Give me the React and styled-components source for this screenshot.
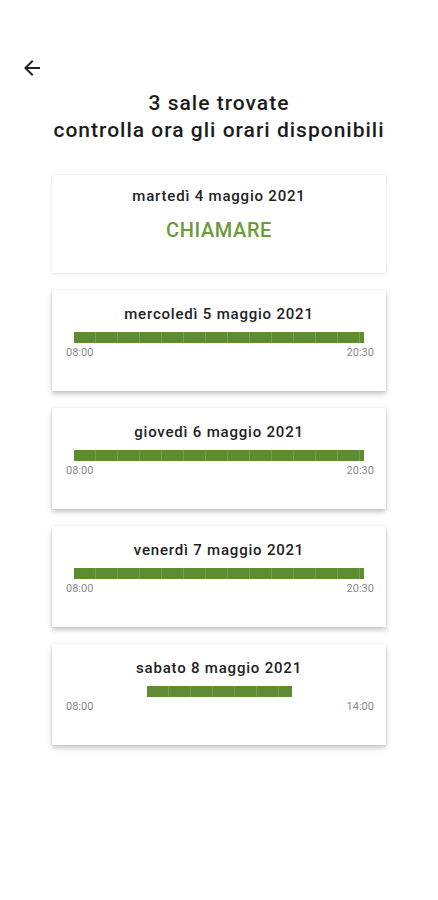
import React from "react";
import styled, { createGlobalStyle } from "styled-components";

const Global = createGlobalStyle`
  html, body { margin: 0; padding: 0; background: #ffffff; }
  body { font-family: Roboto, "Noto Sans", sans-serif; color: #1f1f1f; }
`;

const Page = styled.div`
  width: 438px;
  min-height: 900px;
  background: #fff;
  display: flex;
  flex-direction: column;
  align-items: center;
`;

const TopBar = styled.div`
  align-self: stretch;
  height: 24px;
  padding: 56px 0 0 20px;
  display: flex;
  align-items: center;
`;

const BackButton = styled.button`
  width: 24px;
  height: 24px;
  padding: 0;
  border: none;
  background: none;
  display: flex;
  color: #222;
`;

const Title = styled.h1`
  margin: 10px 0 0;
  font-size: 21px;
  line-height: 27px;
  font-weight: 500;
  text-align: center;
  color: #1c1c1c;
  letter-spacing: 1px;
`;

const List = styled.div`
  margin-top: 31px;
  display: flex;
  flex-direction: column;
  gap: 17px;
  width: 334px;
`;

const Card = styled.div`
  background: #fff;
  height: ${(p) => (p.$flat ? 98 : 101)}px;
  box-sizing: border-box;
  display: flex;
  flex-direction: column;
  align-items: center;
  box-shadow: ${(p) =>
    p.$flat
      ? "0 0 2px rgba(0,0,0,0.12), 0 1px 2px rgba(0,0,0,0.06)"
      : "0 0 2px rgba(0,0,0,0.10), 0 3px 5px rgba(0,0,0,0.22)"};
`;

const DateText = styled.div`
  margin-top: ${(p) => (p.$flat ? 12 : 15)}px;
  font-size: 15px;
  line-height: 18px;
  font-weight: 500;
  color: #222;
  letter-spacing: 0.8px;
`;

const CallText = styled.div`
  margin-top: 13px;
  font-size: 20px;
  line-height: 24px;
  font-weight: 500;
  color: #6b9a3a;
  letter-spacing: 0.6px;
`;

const Timeline = styled.div`
  align-self: stretch;
  margin-top: 9px;
  padding: 0 12px 0 14px;
  display: flex;
  flex-direction: column;
`;

const Track = styled.div`
  position: relative;
  height: 11px;
  margin: 0 10px 0 8px;
`;

const Bar = styled.div`
  position: absolute;
  top: 0;
  bottom: 0;
  background-color: #5e8c31;
  background-image: repeating-linear-gradient(
    to right,
    transparent 0,
    transparent 21px,
    rgba(255, 255, 255, 0.16) 21px,
    rgba(255, 255, 255, 0.16) 22px
  );
`;

const Labels = styled.div`
  display: flex;
  justify-content: space-between;
  margin-top: 4px;
  font-size: 11px;
  line-height: 12px;
  color: #8a8a8a;
`;

const days = [
  { date: "mercoledì 5 maggio 2021", from: "08:00", to: "20:30", start: 0, end: 1 },
  { date: "giovedì 6 maggio 2021", from: "08:00", to: "20:30", start: 0, end: 1 },
  { date: "venerdì 7 maggio 2021", from: "08:00", to: "20:30", start: 0, end: 1 },
  { date: "sabato 8 maggio 2021", from: "08:00", to: "14:00", start: 0.25, end: 0.75 },
];

const ArrowBack = () => (
  <svg width="24" height="24" viewBox="0 0 24 24" fill="currentColor">
    <path d="M20 11H7.83l5.59-5.59L12 4l-8 8 8 8 1.41-1.41L7.83 13H20v-2z" />
  </svg>
);

export default function App() {
  return (
    <Page>
      <Global />
      <TopBar>
        <BackButton aria-label="indietro">
          <ArrowBack />
        </BackButton>
      </TopBar>
      <Title>
        3 sale trovate
        <br />
        controlla ora gli orari disponibili
      </Title>
      <List>
        <Card $flat>
          <DateText $flat>martedì 4 maggio 2021</DateText>
          <CallText>CHIAMARE</CallText>
        </Card>
        {days.map((d) => (
          <Card key={d.date}>
            <DateText>{d.date}</DateText>
            <Timeline>
              <Track>
                <Bar
                  style={{
                    left: `${d.start * 100}%`,
                    right: `${(1 - d.end) * 100}%`,
                  }}
                />
              </Track>
              <Labels>
                <span>{d.from}</span>
                <span>{d.to}</span>
              </Labels>
            </Timeline>
          </Card>
        ))}
      </List>
    </Page>
  );
}
